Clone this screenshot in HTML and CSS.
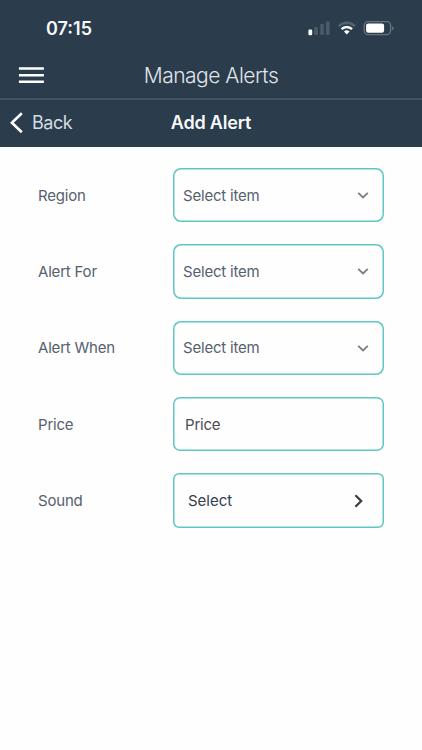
FILE: index.html
```html
<!DOCTYPE html>
<html lang="en">
<head>
<meta charset="utf-8">
<title>Manage Alerts</title>
<link rel="stylesheet" href="styles.css">
</head>
<body>
<header class="header">
  <div class="status">
    <span class="time">07:15</span>
    <svg class="indicators" width="88" height="18" viewBox="0 0 88 18">
      <g fill="#4b5b69">
        <rect x="6.2" y="8" width="3.6" height="8" rx="1"/>
        <rect x="12.2" y="5" width="3.6" height="11" rx="1"/>
        <rect x="18" y="2.6" width="3.6" height="13.4" rx="1"/>
      </g>
      <rect x="0.4" y="10.6" width="3.8" height="5.6" rx="1.2" fill="#fff"/>
      <g fill="none" stroke-width="2.5">
        <path d="M30.7 7.2a11.2 11.2 0 0 1 16.2 0" stroke="#526371"/>
        <path d="M33.6 10.1a7.3 7.3 0 0 1 10.4 0" stroke="#fff"/>
      </g>
      <path d="M36 12.6a4 4 0 0 1 5.6 0L38.8 15.6Z" fill="#fff"/>
      <rect x="56.2" y="2.6" width="26.4" height="13" rx="4" fill="none" stroke="#66747f" stroke-width="1.3"/>
      <rect x="58.1" y="4.4" width="18" height="9.4" rx="2.2" fill="#fff"/>
      <path d="M84.2 7v4.4q1.6-.7 1.6-2.2t-1.6-2.2Z" fill="#66747f"/>
    </svg>
  </div>
  <div class="titlebar">
    <svg class="menu" width="26" height="18" viewBox="0 0 26 18" stroke="#fff" stroke-width="2.5">
      <path d="M.9 2.5h25M.9 9.2h25M.9 15.7h25"/>
    </svg>
    <h1 class="title">Manage Alerts</h1>
  </div>
</header>
<nav class="subbar">
  <a class="back">
    <svg width="14" height="22" viewBox="0 0 14 22" fill="none" stroke="#fff" stroke-width="2.6"><path d="M11.8 1.3 1.9 10.8l9.9 9.5"/></svg>
    <span class="back-text">Back</span>
  </a>
  <h2 class="subtitle">Add Alert</h2>
</nav>
<main class="form">
  <div class="row">
    <span class="label">Region</span>
    <div class="field"><span class="value">Select item</span><svg class="down" width="12" height="8" viewBox="0 0 12 8"><path d="M1.2 1.8 6 6.5l4.8-4.7"/></svg></div>
  </div>
  <div class="row">
    <span class="label">Alert For</span>
    <div class="field"><span class="value">Select item</span><svg class="down" width="12" height="8" viewBox="0 0 12 8"><path d="M1.2 1.8 6 6.5l4.8-4.7"/></svg></div>
  </div>
  <div class="row">
    <span class="label">Alert When</span>
    <div class="field"><span class="value">Select item</span><svg class="down" width="12" height="8" viewBox="0 0 12 8"><path d="M1.2 1.8 6 6.5l4.8-4.7"/></svg></div>
  </div>
  <div class="row">
    <span class="label">Price</span>
    <div class="field price"><span class="value">Price</span></div>
  </div>
  <div class="row">
    <span class="label">Sound</span>
    <div class="field sound"><span class="value">Select</span><svg class="next" width="10" height="14" viewBox="0 0 10 14"><path d="M1.4 1.2 7.2 7l-5.8 5.8"/></svg></div>
  </div>
</main>
</body>
</html>
```
FILE: styles.css
```css
* { box-sizing: border-box; }
body {
  margin: 0;
  min-height: 100vh;
  background: #fefefe;
  font-family: Inter, "Liberation Sans", sans-serif;
  color: #56616d;
}
svg { display: block; flex: none; }
h1, h2 { margin: 0; }
.header {
  height: 100px;
  background: #2b3c4c;
  border-bottom: 2px solid #405161;
}
.status {
  display: flex;
  justify-content: space-between;
  align-items: center;
  height: 56px;
  padding: 0 26px 0 46px;
}
.time {
  font-size: 18px;
  font-weight: 600;
  letter-spacing: 0;
  color: #f6f8fa;
}
.titlebar {
  display: grid;
  grid-template-columns: 26px 1fr 26px;
  align-items: center;
  height: 38px;
  padding: 0 18px;
}
.title {
  text-align: center;
  font-size: 21px;
  font-weight: 300;
  letter-spacing: -0.5px;
  color: #e0e5ea;
}
.subbar {
  display: grid;
  grid-template-columns: 1fr auto 1fr;
  align-items: center;
  height: 46.5px;
  padding: 0 10px 1px;
  background: #2b3c4c;
}
.back {
  display: flex;
  align-items: center;
  gap: 8px;
  font-size: 18px;
  letter-spacing: -0.45px;
  color: #d5dce3;
}
.subtitle {
  font-size: 18px;
  font-weight: 600;
  letter-spacing: -0.2px;
  color: #f6f8fa;
}
.form {
  display: grid;
  gap: 21.9px;
  padding: 21.3px 38px 0;
}
.row {
  display: grid;
  grid-template-columns: 135px 211px;
  align-items: center;
}
.label, .value {
  font-size: 15px;
  letter-spacing: -0.2px;
  white-space: nowrap;
}
.field {
  display: flex;
  justify-content: space-between;
  align-items: center;
  height: 54.5px;
  padding: 0 15px 0 10px;
  box-shadow: inset 0 0 0 1.5px #5ec8c0;
  border-radius: 8px;
}
.price { padding-left: 12px; color: #4b4d50; border-radius: 7px; }
.sound { padding: 0 20px 0 15px; color: #34404f; border-radius: 6px; }
.sound .value { letter-spacing: 0; }
.down, .next { fill: none; stroke: #7b7f83; stroke-width: 1.8; }
.next { stroke: #3c3e42; stroke-width: 2.3; }
```
